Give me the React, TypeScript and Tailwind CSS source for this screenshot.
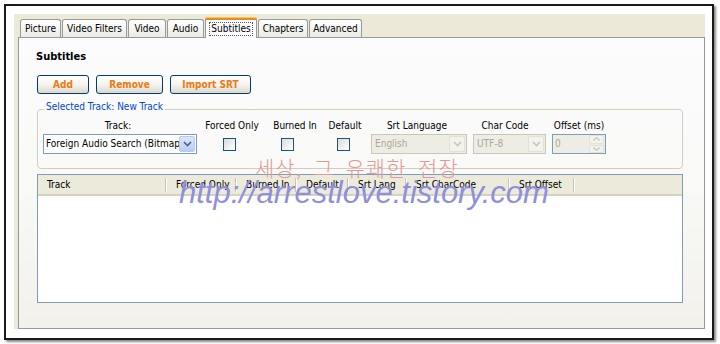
import React from "react";

const font = { fontFamily: '"DejaVu Sans Condensed", "Liberation Sans", sans-serif' };

function Chevron({ color }: { color: string }) {
  return (
    <svg width="9" height="6" viewBox="0 0 9 6">
      <path d="M1 1 L4.5 4.5 L8 1" fill="none" stroke={color} strokeWidth="1.6" />
    </svg>
  );
}

function Tab({ label, w, ml, active }: { label: string; w: string; ml: string; active?: boolean }) {
  if (active) {
    return (
      <div
        className={`${w} ${ml} relative z-10 -mb-[1px] h-[21px] rounded-t-[3px] border-x border-[#919B9C] bg-[#FCFCFE] flex flex-col`}
      >
        <div className="h-[3px] -mx-[1px] rounded-t-[3px] bg-[#E68B2C] border-t border-[#FFC83C]" />
        <div className="flex-1 flex items-center justify-center">
          <span className="border border-dotted border-[#555] px-[1px] leading-[12px] text-black">{label}</span>
        </div>
      </div>
    );
  }
  return (
    <div
      className={`${w} ${ml} h-[18px] rounded-t-[3px] border border-b-0 border-[#919B9C] bg-gradient-to-b from-white to-[#ECEBE6] flex items-center justify-center text-black`}
    >
      {label}
    </div>
  );
}

function XPButton({ label, w, ml }: { label: string; w: string; ml: string }) {
  return (
    <div
      className={`${w} ${ml} h-[19px] rounded-[3px] border border-[#003C74] bg-gradient-to-b from-white via-[#F5F4EF] to-[#DCD8CC] flex items-center justify-center font-bold text-[#EE7A10]`}
    >
      {label}
    </div>
  );
}

function Checkbox({ ml }: { ml: string }) {
  return (
    <div className={`${ml} w-[13px] h-[13px] border border-[#1C5180] bg-gradient-to-br from-[#DCDCD7] to-white`} />
  );
}

export default function App() {
  return (
    <div className="w-[720px] h-[344px] bg-white relative overflow-hidden text-[10px] leading-[14px]" style={font}>
      <div className="ml-[4px] mt-[4px] w-[710px] h-[336px] border-2 border-[#1a1a1a] shadow-[2px_2px_2px_rgba(0,0,0,0.45)] pl-[8px] pt-[8px] bg-white">
        <div className="w-[691px] h-[315px] bg-[#ECE9D8] pt-[2px] pl-[4px] flex flex-col">
          {/* tabs */}
          <div className="flex items-end h-[21px] pl-[2px]">
            <Tab label="Picture" w="w-[41px]" ml="ml-0" />
            <Tab label="Video Filters" w="w-[65px]" ml="ml-[1px]" />
            <Tab label="Video" w="w-[38px]" ml="ml-[1px]" />
            <Tab label="Audio" w="w-[37px]" ml="ml-[1px]" />
            <Tab label="Subtitles" w="w-[52px]" ml="ml-[1px]" active />
            <Tab label="Chapters" w="w-[50px]" ml="ml-[1px]" />
            <Tab label="Advanced" w="w-[53px]" ml="ml-[1px]" />
          </div>
          {/* panel */}
          <div className="w-[687px] h-[292px] border border-[#919B9C] bg-gradient-to-b from-[#FCFCFE] via-[#F9F9F7] to-[#F2F1EC] flex flex-col text-black">
            <div className="ml-[17px] mt-[12px] font-bold text-[11px] leading-[14px]">Subtitles</div>
            <div className="flex ml-[18px] mt-[11px]">
              <XPButton label="Add" w="w-[52px]" ml="ml-0" />
              <XPButton label="Remove" w="w-[67px]" ml="ml-[7px]" />
              <XPButton label="Import SRT" w="w-[81px]" ml="ml-[7px]" />
            </div>
            <fieldset className="ml-[18px] mt-[6px] w-[646px] border border-[#D0D0BF] rounded-[4px] pb-[14px]">
              <legend className="ml-[6px] px-[2px] pb-[4px] leading-[14px] text-[#0046D5]">
                Selected Track: New Track
              </legend>
              <div className="flex mt-[1px] h-[14px]">
                <div className="ml-[50px] w-[60px] text-center">Track:</div>
                <div className="ml-[49px] w-[70px] text-center">Forced Only</div>
                <div className="ml-[1px] w-[54px] text-center">Burned In</div>
                <div className="ml-[3px] w-[40px] text-center">Default</div>
                <div className="ml-[12px] w-[80px] text-center">Srt Language</div>
                <div className="ml-[18px] w-[60px] text-center">Char Code</div>
                <div className="ml-[12px] w-[64px] text-center">Offset (ms)</div>
              </div>
              <div className="flex items-center mt-[1px] h-[20px]">
                <div className="ml-[5px] w-[154px] h-[20px] border border-[#7F9DB9] bg-white flex items-center">
                  <span className="flex-1 pl-[2px] whitespace-nowrap overflow-hidden">Foreign Audio Search (Bitmap</span>
                  <div className="w-[16px] h-[16px] mr-[1px] rounded-[2px] border border-[#B6C8F6] bg-gradient-to-b from-[#DCE6FC] to-[#B9CDF8] flex items-center justify-center">
                    <Chevron color="#4D6185" />
                  </div>
                </div>
                <Checkbox ml="ml-[26px]" />
                <Checkbox ml="ml-[45px]" />
                <Checkbox ml="ml-[43px]" />
                <div className="ml-[21px] w-[96px] h-[20px] border border-[#C9C7BA] bg-[#EEEDE4] flex items-center">
                  <span className="flex-1 pl-[3px] text-[#ACA899]">English</span>
                  <div className="w-[16px] h-[16px] mr-[1px] rounded-[2px] border border-[#E2E1D9] bg-[#F3F2EC] flex items-center justify-center">
                    <Chevron color="#C9C7BA" />
                  </div>
                </div>
                <div className="ml-[6px] w-[73px] h-[20px] border border-[#C9C7BA] bg-[#EEEDE4] flex items-center">
                  <span className="flex-1 pl-[3px] text-[#ACA899]">UTF-8</span>
                  <div className="w-[16px] h-[16px] mr-[1px] rounded-[2px] border border-[#E2E1D9] bg-[#F3F2EC] flex items-center justify-center">
                    <Chevron color="#C9C7BA" />
                  </div>
                </div>
                <div className="ml-[6px] w-[54px] h-[20px] border border-[#7F9DB9] bg-[#EEEDE4] flex items-center">
                  <span className="flex-1 pl-[2px] text-[#ACA899]">0</span>
                  <div className="w-[15px] h-[18px] flex flex-col gap-[1px] mr-[1px]">
                    <div className="flex-1 rounded-[2px] bg-[#F3F2EC] border border-[#E2E1D9] flex items-center justify-center">
                      <svg width="7" height="4" viewBox="0 0 7 4"><path d="M0.5 3.5 L3.5 0.5 L6.5 3.5" fill="none" stroke="#C9C7BA" strokeWidth="1.3" /></svg>
                    </div>
                    <div className="flex-1 rounded-[2px] bg-[#F3F2EC] border border-[#E2E1D9] flex items-center justify-center">
                      <svg width="7" height="4" viewBox="0 0 7 4"><path d="M0.5 0.5 L3.5 3.5 L6.5 0.5" fill="none" stroke="#C9C7BA" strokeWidth="1.3" /></svg>
                    </div>
                  </div>
                </div>
              </div>
            </fieldset>
            {/* list */}
            <div className="ml-[18px] mt-[5px] w-[646px] h-[129px] border border-[#7F9DB9] bg-white flex flex-col">
              <div className="h-[21px] flex items-stretch bg-[#EBEADB] border-b-[2px] border-[#D6D2C2]">
                {[
                  ["Track", "w-[129px]"],
                  ["Forced Only", "w-[70px]"],
                  ["Burned In", "w-[60px]"],
                  ["Default", "w-[52px]"],
                  ["Srt Lang", "w-[58px]"],
                  ["Srt CharCode", "w-[103px]"],
                  ["Srt Offset", "w-[65px]"],
                ].map(([t, w]) => (
                  <div key={t} className={`${w} flex items-center justify-between`}>
                    <span className="pl-[9px] whitespace-nowrap">{t}</span>
                    <div className="flex h-[14px]">
                      <div className="w-[1px] bg-[#C7C5B2]" />
                      <div className="w-[1px] bg-white" />
                    </div>
                  </div>
                ))}
              </div>
            </div>
          </div>
        </div>
      </div>
      {/* watermark */}
      <div
        className="absolute left-[255px] top-[153px] text-[21px] leading-[28px] text-[#E59898] tracking-[1px] [word-spacing:6px] whitespace-nowrap"
        style={{ fontFamily: '"Noto Sans CJK KR", sans-serif', fontWeight: 300 }}
      >
        세상, 그 유쾌한 전장
      </div>
      <div
        className="absolute left-[179px] top-[175px] text-[31px] leading-[36px] italic text-[#8F8FDC] whitespace-nowrap"
        style={{ fontFamily: '"Liberation Sans", sans-serif' }}
      >
        http://arrestlove.tistory.com
      </div>
    </div>
  );
}
